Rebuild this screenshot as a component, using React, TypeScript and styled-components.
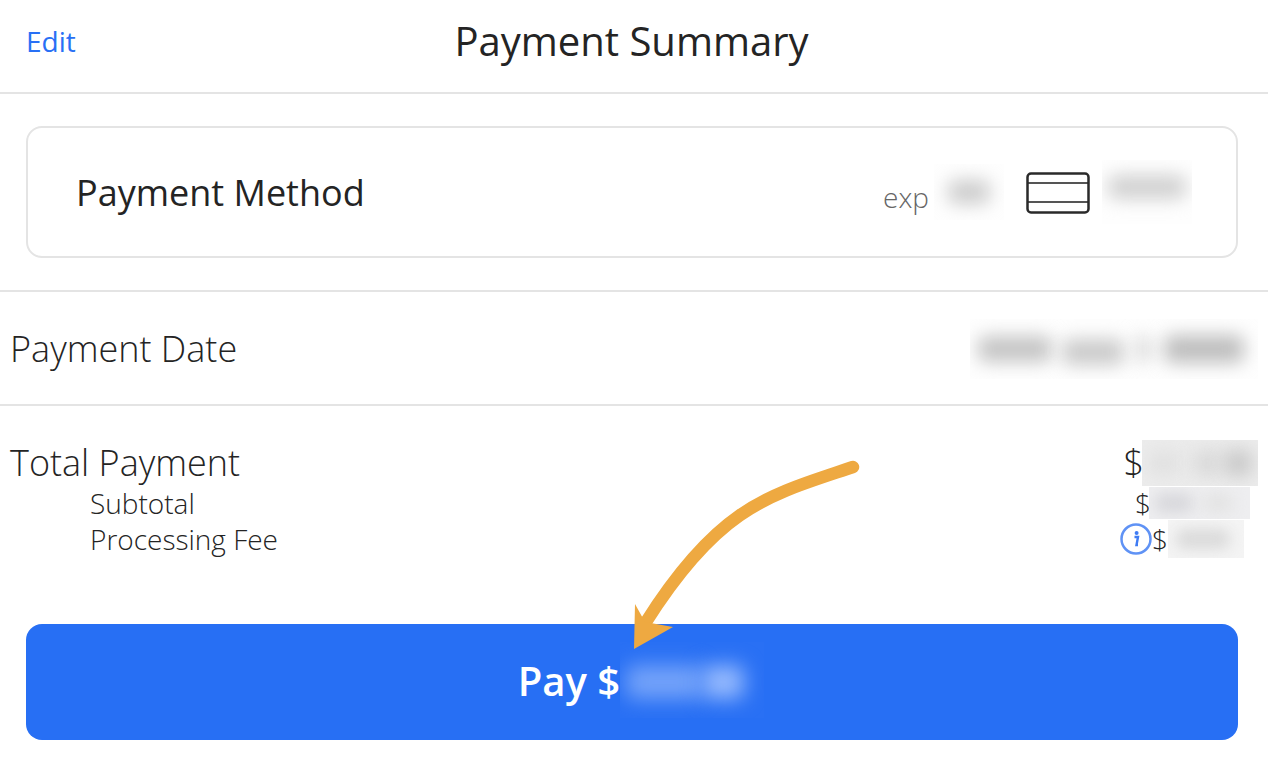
import styled, { createGlobalStyle } from 'styled-components';

const GlobalStyle = createGlobalStyle`
  html, body {
    margin: 0;
    padding: 0;
    background: #ffffff;
  }
  body {
    font-family: 'Open Sans', 'Noto Sans', sans-serif;
    color: #242424;
  }
`;

const Page = styled.div`
  position: relative;
  width: 1268px;
  height: 770px;
  overflow: hidden;
`;

const Header = styled.header`
  position: relative;
  height: 94px;
  box-sizing: border-box;
  display: flex;
  align-items: center;
  justify-content: center;
  padding: 0 5px 10px 0;
  border-bottom: 2px solid #e4e4e4;
`;

const EditLink = styled.a`
  position: absolute;
  left: 26px;
  top: 22px;
  font-size: 28px;
  line-height: 38px;
  color: #2870f5;
`;

const Title = styled.h1`
  margin: 0;
  font-size: 40px;
  font-weight: 400;
  line-height: 54px;
`;

const CardSection = styled.section`
  height: 198px;
  box-sizing: border-box;
  padding: 32px 30px 0 26px;
  border-bottom: 2px solid #e4e4e4;
`;

const MethodCard = styled.div`
  height: 132px;
  box-sizing: border-box;
  border: 2px solid #e4e4e4;
  border-radius: 16px;
  display: flex;
  align-items: center;
  justify-content: space-between;
  padding: 0 44px 0 48px;
`;

const MethodLabel = styled.span`
  font-size: 36px;
  line-height: 48px;
  margin-top: 2px;
`;

const MethodRight = styled.div`
  display: flex;
  align-items: center;
`;

const ExpLabel = styled.span`
  font-size: 28px;
  font-weight: 300;
  color: #666666;
  line-height: 38px;
  margin-top: 10px;
  margin-right: 5px;
`;

const Redacted = styled.span<{ $w: number; $h: number; $bg?: string; $pad?: number; $shift?: number }>`
  display: flex;
  flex: none;
  align-items: center;
  overflow: hidden;
  box-sizing: border-box;
  width: ${p => p.$w}px;
  height: ${p => p.$h}px;
  padding: ${p => p.$shift ?? 0}px ${p => p.$pad ?? 8}px 0;
  background: ${p => p.$bg ?? '#fefefe'};
`;

const Blob = styled.i<{ $w: number; $h: number; $color?: string; $gap?: number; $blur?: number; $drop?: number }>`
  display: block;
  flex: none;
  width: ${p => p.$w}px;
  height: ${p => p.$h}px;
  margin-left: ${p => p.$gap ?? 0}px;
  margin-top: ${p => p.$drop ?? 0}px;
  border-radius: 8px;
  background: ${p => p.$color ?? '#d0d0d0'};
  filter: blur(${p => p.$blur ?? 9}px);
`;

const CardGlyph = styled.svg`
  display: block;
  margin: 1px 12px 0 22px;
`;

const DateRow = styled.section`
  height: 114px;
  box-sizing: border-box;
  display: flex;
  align-items: center;
  justify-content: space-between;
  padding: 2px 10px 0;
  border-bottom: 2px solid #e4e4e4;
`;

const RowLabel = styled.span`
  font-size: 36px;
  font-weight: 300;
  line-height: 48px;
`;

const Totals = styled.section`
  height: 218px;
  box-sizing: border-box;
  padding: 34px 10px 0;
`;

const TotalLine = styled.div<{ $indent?: number; $height: number; $pad: number }>`
  display: flex;
  align-items: center;
  justify-content: space-between;
  height: ${p => p.$height}px;
  padding-left: ${p => p.$indent ?? 0}px;
  padding-right: ${p => p.$pad}px;
`;

const SubLabel = styled.span`
  font-size: 28px;
  font-weight: 300;
  line-height: 36px;
`;

const Amount = styled.div`
  display: flex;
  align-items: center;
`;

const Dollar = styled.span<{ $size: number; $tuck?: number }>`
  font-size: ${p => p.$size}px;
  font-weight: 300;
  line-height: 1;
  margin-right: ${p => -(p.$tuck ?? 0)}px;
`;

const InfoBadge = styled.svg`
  display: block;
`;

const ButtonWrap = styled.div`
  padding: 0 30px 0 26px;
`;

const PayButton = styled.button`
  width: 100%;
  height: 116px;
  border: 0;
  border-radius: 16px;
  background: #276ff4;
  color: #ffffff;
  font-family: inherit;
  font-size: 40px;
  font-weight: 600;
  display: flex;
  align-items: center;
  justify-content: center;
  padding: 0 0 4px 18px;
`;

const ArrowOverlay = styled.svg`
  position: absolute;
  left: 620px;
  top: 450px;
`;

export default function App() {
  return (
    <Page>
      <GlobalStyle />
      <Header>
        <EditLink>Edit</EditLink>
        <Title>Payment Summary</Title>
      </Header>

      <CardSection>
        <MethodCard>
          <MethodLabel>Payment Method</MethodLabel>
          <MethodRight>
            <ExpLabel>exp</ExpLabel>
            <Redacted $w={70} $h={56} $pad={14}>
              <Blob $w={42} $h={24} $color="#cccccc" />
            </Redacted>
            <CardGlyph width="64" height="42" viewBox="0 0 64 42" fill="none" stroke="#2a2a2a" strokeWidth="2.5">
              <path d="M1.5 11h61M1.5 30h61" stroke="#555555" strokeWidth="2" />
              <rect x="1.5" y="1.5" width="61" height="39" rx="3.5" />
            </CardGlyph>
            <Redacted $w={90} $h={64} $pad={6}>
              <Blob $w={78} $h={24} $color="#d0d0d0" $drop={-10} />
            </Redacted>
          </MethodRight>
        </MethodCard>
      </CardSection>

      <DateRow>
        <RowLabel>Payment Date</RowLabel>
        <Redacted $w={288} $h={60} $pad={8}>
          <Blob $w={74} $h={26} $color="#c4c4c4" />
          <Blob $w={62} $h={26} $gap={10} $drop={6} $color="#cacaca" />
          <Blob $w={14} $h={28} $gap={12} $color="#d6d6d6" />
          <Blob $w={80} $h={28} $gap={14} $color="#bebebe" />
        </Redacted>
      </DateRow>

      <Totals>
        <TotalLine $height={45} $pad={0}>
          <RowLabel>Total Payment</RowLabel>
          <Amount>
            <Dollar $size={36} $tuck={2}>$</Dollar>
            <Redacted $w={116} $h={46} $bg="#ececec" $pad={6}>
              <Blob $w={32} $h={24} $color="#e0e0e0" />
              <Blob $w={26} $h={26} $gap={14} $color="#d8d8d8" />
              <Blob $w={28} $h={26} $gap={4} $color="#c8c8c8" />
            </Redacted>
          </Amount>
        </TotalLine>
        <TotalLine $indent={80} $height={36} $pad={8}>
          <SubLabel>Subtotal</SubLabel>
          <Amount>
            <Dollar $size={28} $tuck={2}>$</Dollar>
            <Redacted $w={101} $h={32} $bg="#eeeef0" $pad={6}>
              <Blob $w={38} $h={20} $color="#d8d8dc" $blur={7} />
              <Blob $w={30} $h={20} $gap={10} $color="#e4e4e4" $blur={7} />
            </Redacted>
          </Amount>
        </TotalLine>
        <TotalLine $indent={80} $height={36} $pad={14}>
          <SubLabel>Processing Fee</SubLabel>
          <Amount>
            <InfoBadge width="32" height="32" viewBox="0 0 32 32">
              <circle cx="16" cy="16" r="14.5" fill="#ffffff" stroke="#5f92f5" strokeWidth="2.5" />
              <circle cx="16.6" cy="10" r="2" fill="#3f7cf4" />
              <path d="M14.5 14h3.5l-1.5 8h1.5" fill="none" stroke="#3f7cf4" strokeWidth="2.4" />
            </InfoBadge>
            <Dollar $size={28}>$</Dollar>
            <Redacted $w={76} $h={38} $bg="#f4f4f4" $pad={8}>
              <Blob $w={54} $h={20} $color="#dadada" $blur={7} />
            </Redacted>
          </Amount>
        </TotalLine>
      </Totals>

      <ButtonWrap>
        <PayButton>
          Pay $
          <Redacted $w={144} $h={76} $bg="#2970f4" $pad={6} $shift={4}>
            <Blob $w={76} $h={34} $color="#73a2f9" $blur={10} />
            <Blob $w={42} $h={34} $gap={0} $color="#93b8fd" $blur={10} />
          </Redacted>
        </PayButton>
      </ButtonWrap>

      <ArrowOverlay width="250" height="210" viewBox="620 450 250 210" fill="none">
        <path
          d="M853 467C770 495 720 505 646 622"
          stroke="#eea941"
          strokeWidth="12.5"
          strokeLinecap="round"
        />
        <path d="M635 604L645 622L673 627L634 649Z" fill="#eea941" />
      </ArrowOverlay>
    </Page>
  );
}
